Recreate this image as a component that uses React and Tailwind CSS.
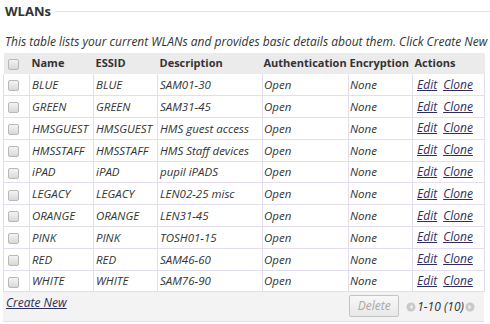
import React from "react";

const rows = [
  ["BLUE", "BLUE", "SAM01-30"],
  ["GREEN", "GREEN", "SAM31-45"],
  ["HMSGUEST", "HMSGUEST", "HMS guest access"],
  ["HMSSTAFF", "HMSSTAFF", "HMS Staff devices"],
  ["iPAD", "iPAD", "pupil iPADS"],
  ["LEGACY", "LEGACY", "LEN02-25 misc"],
  ["ORANGE", "ORANGE", "LEN31-45"],
  ["PINK", "PINK", "TOSH01-15"],
  ["RED", "RED", "SAM46-60"],
  ["WHITE", "WHITE", "SAM76-90"],
];

function Check() {
  return (
    <span className="inline-block w-[11px] h-[11px] rounded-[2px] border border-[#b8b8b8] bg-gradient-to-b from-[#f4f4f4] to-[#d8d8d8] align-middle" />
  );
}

function Arrow({ dir }) {
  return (
    <svg width="10" height="10" viewBox="0 0 10 10" className="inline-block">
      <circle cx="5" cy="5" r="4.5" fill="#c8c8c8" />
      {dir === "left" ? (
        <path d="M6.5 2.5 L3.5 5 L6.5 7.5 Z" fill="#f0f0f0" />
      ) : (
        <path d="M3.5 2.5 L6.5 5 L3.5 7.5 Z" fill="#f0f0f0" />
      )}
    </svg>
  );
}

export default function App() {
  return (
    <div className="w-[490px] h-[324px] bg-white overflow-hidden font-['Open_Sans',sans-serif] text-[#333] relative">
      <div className="flex items-center pl-[5px] pt-[4px] h-[18px]">
        <span className="font-bold text-[13px] text-[#333] leading-none">WLANs</span>
        <div className="flex-1 h-px bg-[#e2e2e2] ml-[4px]" />
      </div>
      <div className="pl-[5px] mt-[16px] text-[12px] italic whitespace-nowrap leading-[16px]">
        This table lists your current WLANs and provides basic details about them. Click Create New
      </div>
      <div className="ml-[3px] mt-[3px] w-[481px]">
        <table className="table-fixed border-collapse w-[481px] text-[11.5px]">
          <colgroup>
            <col className="w-[26px]" />
            <col className="w-[64px]" />
            <col className="w-[64px]" />
            <col className="w-[105px]" />
            <col className="w-[86px]" />
            <col className="w-[64px]" />
            <col className="w-[72px]" />
          </colgroup>
          <thead>
            <tr className="h-[21px] bg-[#ebebeb] text-left text-[11px]">
              <th className="pl-[4px] font-bold"><Check /></th>
              <th className="pl-[2px] font-bold">Name</th>
              <th className="pl-[2px] font-bold">ESSID</th>
              <th className="pl-[2px] font-bold">Description</th>
              <th className="pl-[1px] font-bold whitespace-nowrap">Authentication</th>
              <th className="pl-[1px] font-bold whitespace-nowrap">Encryption</th>
              <th className="pl-[2px] font-bold">Actions</th>
            </tr>
          </thead>
          <tbody>
            {rows.map((r) => (
              <tr key={r[0]} className="h-[21.8px] border-b border-[#e3ddef] italic">
                <td className="pl-[4px] border-r border-[#e3ddef] border-l border-l-[#e3ddef]"><Check /></td>
                <td className="pl-[2px] border-r border-[#e3ddef]">{r[0]}</td>
                <td className="pl-[2px] border-r border-[#e3ddef]">{r[1]}</td>
                <td className="pl-[2px] border-r border-[#e3ddef] whitespace-nowrap overflow-hidden">{r[2]}</td>
                <td className="pl-[1px] border-r border-[#e3ddef]">Open</td>
                <td className="pl-[1px] border-r border-[#e3ddef]">None</td>
                <td className="pl-[4px] border-r border-[#e3ddef] whitespace-nowrap text-[12px]">
                  <a className="underline text-[#2e2e5c] mr-[6px]">Edit</a>
                  <a className="underline text-[#2e2e5c]">Clone</a>
                </td>
              </tr>
            ))}
          </tbody>
        </table>
        <div className="h-[30px] bg-[#f3f3f3] border-b border-[#e3ddef] flex items-start">
          <a className="ml-[3px] mt-[2px] text-[12px] italic underline text-[#2e2e5c]">Create New</a>
          <div className="flex-1" />
          <div className="mt-[3px] w-[50px] h-[22px] border border-[#c4c4c4] rounded-[2px] bg-gradient-to-b from-[#f8f8f8] to-[#e8e8e8] text-[#a8a8a8] text-[12px] italic flex items-center justify-center">
            Delete
          </div>
          <div className="mt-[9px] ml-[7px] mr-[9px] flex items-center gap-[1px] text-[12px] italic leading-none">
            <Arrow dir="left" />
            <span>1-10 (10)</span>
            <Arrow dir="right" />
          </div>
        </div>
      </div>
    </div>
  );
}
